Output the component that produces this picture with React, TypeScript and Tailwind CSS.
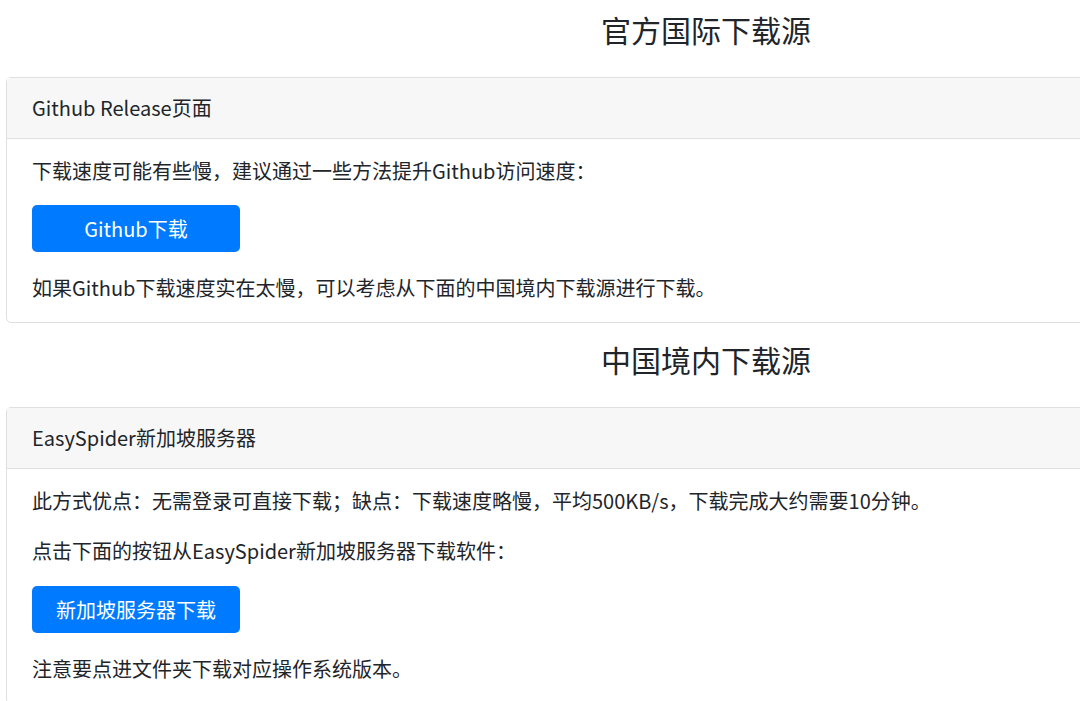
const font = { fontFamily: '"Noto Sans CJK SC", "Noto Sans", sans-serif' };

function Card({ title, children }: { title: string; children: React.ReactNode }) {
  return (
    <div className="w-[1400px] rounded-[5px] border border-[#dfdfdf] bg-white">
      <div className="h-[61px] border-b border-[#dfdfdf] bg-[#f7f7f7] px-[25px] flex items-center text-[20px] leading-[30px] text-[#212529]">
        {title}
      </div>
      <div className="px-[25px] pt-[17px] pb-[19px] text-[20px] leading-[30px] text-[#212529]">{children}</div>
    </div>
  );
}

function DownloadButton({ label }: { label: string }) {
  return (
    <button className="w-[208px] h-[47px] rounded-[5px] bg-[#007bff] text-white text-[20px] leading-[30px] mb-[21px]">
      {label}
    </button>
  );
}

export default function App() {
  return (
    <div className="w-[1080px] h-[701px] overflow-hidden bg-white" style={font}>
      <div className="ml-[6px] w-[1400px] pt-[7px]">
        <h2 className="text-center text-[30px] leading-[45px] text-[#212529] mb-[25px]">官方国际下载源</h2>
        <Card title="Github Release页面">
          <p className="mb-[19px]">下载速度可能有些慢，建议通过一些方法提升Github访问速度：</p>
          <DownloadButton label="Github下载" />
          <p>如果Github下载速度实在太慢，可以考虑从下面的中国境内下载源进行下载。</p>
        </Card>
        <h2 className="mt-[14px] text-center text-[30px] leading-[45px] text-[#212529] mb-[25px]">中国境内下载源</h2>
        <Card title="EasySpider新加坡服务器">
          <p className="mb-[20px]">此方式优点：无需登录可直接下载；缺点：下载速度略慢，平均500KB/s，下载完成大约需要10分钟。</p>
          <p className="mb-[20px]">点击下面的按钮从EasySpider新加坡服务器下载软件：</p>
          <DownloadButton label="新加坡服务器下载" />
          <p>注意要点进文件夹下载对应操作系统版本。</p>
        </Card>
      </div>
    </div>
  );
}
